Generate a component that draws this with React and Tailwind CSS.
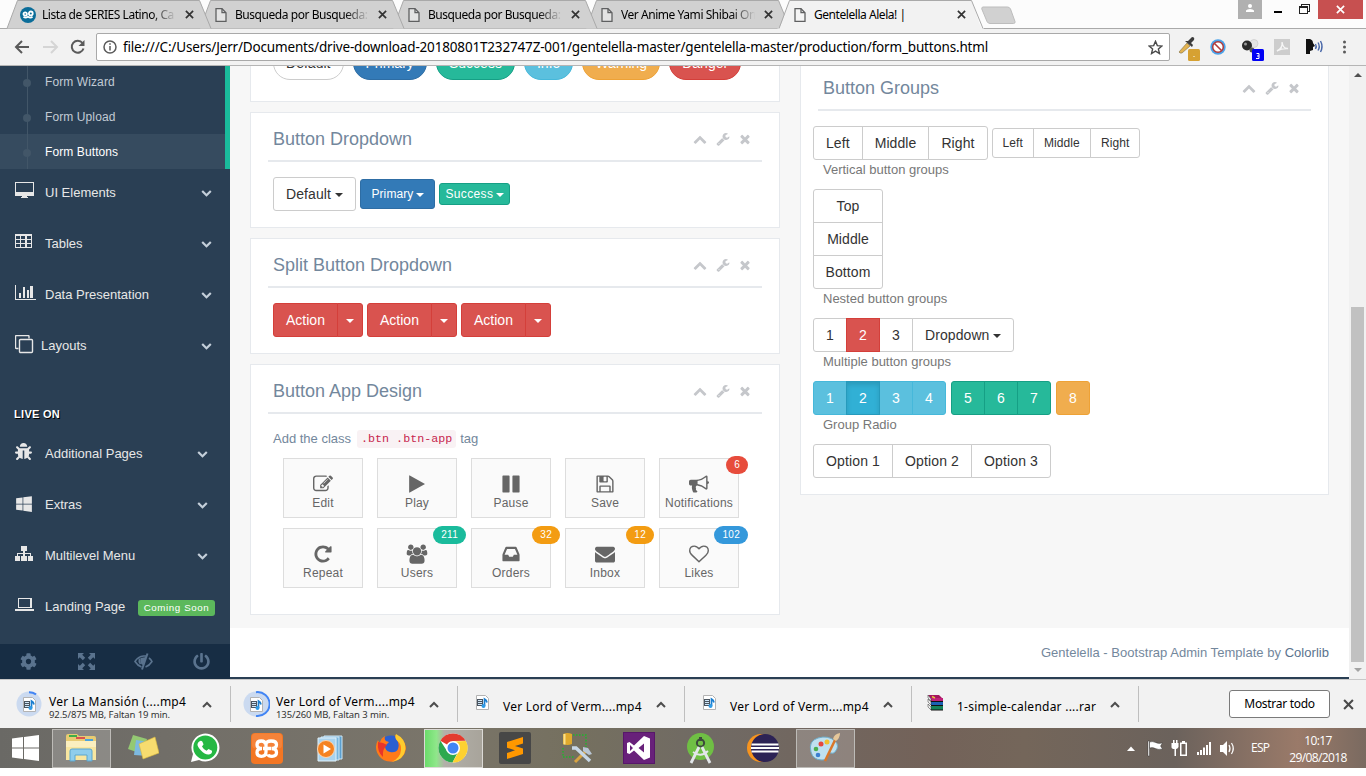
import React from 'react';
import { FaBug, FaWindows, FaCog, FaPowerOff } from 'react-icons/fa';

const P = {
  close: 'M1490 1322q0 40-28 68l-136 136q-28 28-68 28t-68-28l-294-294-294 294q-28 28-68 28t-68-28l-136-136q-28-28-28-68t28-68l294-294-294-294q-28-28-28-68t28-68l136-136q28-28 68-28t68 28l294 294 294-294q28-28 68-28t68 28l136 136q28 28 28 68t-28 68l-294 294 294 294q28 28 28 68z',
  up: 'M1683 1331l-166 165q-19 19-45 19t-45-19l-531-531-531 531q-19 19-45 19t-45-19l-166-165q-19-19-19-45.5t19-45.5l742-741q19-19 45-19t45 19l742 741q19 19 19 45.5t-19 45.5z',
  down: 'M1683 808l-742 741q-19 19-45 19t-45-19l-742-741q-19-19-19-45.5t19-45.5l166-165q19-19 45-19t45 19l531 531 531-531q19-19 45-19t45 19l166 165q19 19 19 45.5t-19 45.5z',
  wrench: 'M448 1472q0-26-19-45t-45-19-45 19-19 45 19 45 45 19 45-19 19-45zm644-420l-682 682q-37 37-90 37-52 0-91-37l-106-108q-38-36-38-90 0-53 38-91l681-681q39 98 114.5 173.5t173.5 114.5zm634-435q0 39-23 106-47 134-164.5 217.5t-258.5 83.5q-185 0-316.5-131.5t-131.5-316.5 131.5-316.5 316.5-131.5q58 0 121.5 16.5t107.5 46.5q16 11 16 28t-16 28l-293 169v224l193 107q5-3 79-48.5t135.5-81 70.5-35.5q15 0 23.5 10t8.5 25z',
  play: 'M1576 927l-1328 738q-23 13-39.5 3t-16.5-36v-1472q0-26 16.5-36t39.5 3l1328 738q23 13 23 31t-23 31z',
  pause: 'M1664 192v1408q0 26-19 45t-45 19h-512q-26 0-45-19t-19-45v-1408q0-26 19-45t45-19h512q26 0 45 19t19 45zm-896 0v1408q0 26-19 45t-45 19h-512q-26 0-45-19t-19-45v-1408q0-26 19-45t45-19h512q26 0 45 19t19 45z',
  edit: 'M888 1184l116-116-152-152-116 116v56h96v96h56zm440-720q-16-16-33 1l-350 350q-17 17-1 33t33-1l350-350q17-17 1-33zm80 594v190q0 119-84.5 203.5t-203.5 84.5h-832q-119 0-203.5-84.5t-84.5-203.5v-832q0-119 84.5-203.5t203.5-84.5h832q63 0 117 25 15 7 18 23 3 17-9 29l-49 49q-14 14-32 8-23-6-45-6h-832q-66 0-113 47t-47 113v832q0 66 47 113t113 47h832q66 0 113-47t47-113v-126q0-13 9-22l64-64q15-15 35-7t20 29zm-96-738l288 288-672 672h-288v-288zm444 132l-92 92-288-288 92-92q28-28 68-28t68 28l152 152q28 28 28 68t-28 68z',
  save: 'M512 1536h768v-384h-768v384zm896 0h128v-896q0-14-10-38.5t-20-34.5l-281-281q-10-10-34-20t-39-10v416q0 40-28 68t-68 28h-576q-40 0-68-28t-28-68v-416h-128v1280h128v-416q0-40 28-68t68-28h832q40 0 68 28t28 68v416zm-384-928v-320q0-13-9.5-22.5t-22.5-9.5h-192q-13 0-22.5 9.5t-9.5 22.5v320q0 13 9.5 22.5t22.5 9.5h192q13 0 22.5-9.5t9.5-22.5zm640 32v928q0 40-28 68t-68 28h-1344q-40 0-68-28t-28-68v-1344q0-40 28-68t68-28h928q40 0 88 20t76 48l280 280q28 28 48 76t20 88z',
  bullhorn: 'M1664 640q53 0 90.5 37.5t37.5 90.5-37.5 90.5-90.5 37.5v384q0 52-38 90t-90 38q-417-347-812-380-58 19-91 66t-31 100.5 40 92.5q-20 33-23 65.5t6 58 33.5 55 48 50 61.5 50.5q-29 58-111.5 83t-168.5 11.5-132-55.5q-7-23-29.5-87.5t-32-94.5-23-89-15-101 3.5-98.5 22-110.5h-122q-66 0-113-47t-47-113v-192q0-66 47-113t113-47h480q435 0 896-384 52 0 90 38t38 90v384zm-128 604v-954q-394 302-768 343v270q377 42 768 341z',
  repeat: 'M1664 256v448q0 26-19 45t-45 19h-448q-42 0-59-40-17-39 14-69l138-138q-148-137-349-137-104 0-198.5 40.5t-163.5 109.5-109.5 163.5-40.5 198.5 40.5 198.5 109.5 163.5 163.5 109.5 198.5 40.5q119 0 225-52t179-147q7-10 23-12 15 0 25 9l137 138q9 8 9.5 20.5t-7.5 22.5q-109 132-264 204.5t-327 72.5q-156 0-298-61t-245-164-164-245-61-298 61-298 164-245 245-164 298-61q147 0 284.5 55.5t244.5 156.5l130-129q29-31 70-14 39 17 39 59z',
  users: 'M657 896q-162 5-265 128h-134q-82 0-138-40.5t-56-118.5q0-353 124-353 6 0 43.5 21t97.5 42.5 119 21.5q67 0 133-23-5 37-5 66 0 139 81 256zm1071 637q0 120-73 189.5t-194 69.5h-874q-121 0-194-69.5t-73-189.5q0-53 3.5-103.5t14-109 26.5-108.5 43-97.5 62-81 85.5-53.5 111.5-20q10 0 43 21.5t73 48 107 48 135 21.5 135-21.5 107-48 73-48 43-21.5q61 0 111.5 20t85.5 53.5 62 81 43 97.5 26.5 108.5 14 109 3.5 103.5zm-1024-1277q0 106-75 181t-181 75-181-75-75-181 75-181 181-75 181 75 75 181zm704 384q0 159-112.5 271.5t-271.5 112.5-271.5-112.5-112.5-271.5 112.5-271.5 271.5-112.5 271.5 112.5 112.5 271.5zm576 225q0 78-56 118.5t-138 40.5h-134q-103-123-265-128 81-117 81-256 0-29-5-66 66 23 133 23 59 0 119-21.5t97.5-42.5 43.5-21q124 0 124 353zm-128-609q0 106-75 181t-181 75-181-75-75-181 75-181 181-75 181 75 75 181z',
  inbox: 'M1151 960h316q-1-3-2.5-8.5t-2.5-7.5l-212-496h-708l-212 496q-1 3-2.5 8.5t-2.5 7.5h316l95 192h320zm513 30v482q0 26-19 45t-45 19h-1408q-26 0-45-19t-19-45v-482q0-62 25-123l238-552q10-25 36.5-42t52.5-17h832q26 0 52.5 17t36.5 42l238 552q25 61 25 123z',
  envelope: 'M1792 710v794q0 66-47 113t-113 47h-1472q-66 0-113-47t-47-113v-794q44 49 101 87 362 246 497 345 57 42 92.5 65.5t94.5 48 110 24.5h2q51 0 110-24.5t94.5-48 92.5-65.5q170-123 498-345 57-39 100-87zm0-294q0 79-49 151t-122 123q-376 261-468 325-10 7-42.5 31t-54 38.5-52 32.5-57.5 27-50 9h-2q-23 0-50-9t-57.5-27-52-32.5-54-38.5-42.5-31q-91-64-262-182.5t-205-142.5q-62-42-117-115.5t-55-136.5q0-78 41.5-130t118.5-52h1472q65 0 112.5 47t47.500 113z',
  heart: 'M1664 596q0-81-21.5-143t-55-98.5-81.5-59.5-94-31-98-8-112 25.5-110.5 64-86.5 72-60 61.5q-18 22-49 22t-49-22q-24-28-60-61.5t-86.5-72-110.5-64-112-25.5-98 8-94 31-81.5 59.5-55 98.5-21.5 143q0 168 187 355l581 560 580-559q188-188 188-356zm128 0q0 221-229 450l-623 600q-18 18-44 18t-44-18l-624-602q-10-8-27.5-26t-55.5-65.5-68-97.5-53.5-121-23.5-138q0-220 127-344t351-124q62 0 126.5 21.5t120 58 95.5 68.5 76 68q36-36 76-68t95.5-68.5 120-58 126.5-21.5q224 0 351 124t127 344z',
};

function Glyph({ name, className, box = '0 0 1792 1792' }) {
  return (
    <svg viewBox={box} className={className} fill="currentColor">
      <path d={P[name]} />
    </svg>
  );
}

/* ---------- browser chrome ---------- */

const X = ({ className }) => (
  <svg viewBox="0 0 10 10" className={className} fill="none" stroke="currentColor" strokeWidth="1.9">
    <path d="M1 1l8 8M9 1l-8 8" />
  </svg>
);

const PageIcon = () => (
  <svg viewBox="0 0 12 14" className="h-3.5 w-3" fill="none" stroke="#5f6061" strokeWidth="1.3">
    <path d="M1 .7h6l4 4v8.6H1z" fill="#f7f7f7" fillOpacity=".5" />
    <path d="M7 .7v4h4" />
  </svg>
);

const SeriesIcon = () => (
  <svg viewBox="0 0 16 16" className="-ml-0.5 size-4">
    <circle cx="8" cy="8" r="8" fill="#0b6d99" />
    <circle cx="5.2" cy="7" r="1.7" fill="none" stroke="#fff" strokeWidth="1.8" />
    <circle cx="10.8" cy="6.4" r="1.9" fill="none" stroke="#fff" strokeWidth="1.8" />
    <path d="M3.500 9.800q2 1.500 4.500 0 2.500 1.500 4.500 0" fill="none" stroke="#fff" strokeWidth="1.700" />
  </svg>
);

const tabs = [
  { title: 'Lista de SERIES Latino, Ca', z: 'z-[5]' },
  { title: 'Busqueda por Busqueda:', z: 'z-[4]' },
  { title: 'Busqueda por Busqueda:', z: 'z-[3]' },
  { title: 'Ver Anime Yami Shibai On', z: 'z-[2]' },
  { title: 'Gentelella Alela! |', z: 'z-[6]', active: true },
];

function Tab({ tab, first }) {
  return (
    <div className={`relative flex h-[29px] w-[193px] items-center pl-[17px] ${tab.z}`}>
      <svg className="absolute top-0 left-0 h-[29px] w-[208px]" viewBox="0 0 208 29">
        <path d={tab.active ? 'M0 29L1 28.500C4 27 4 24 12.500.5H194.500C203 24 203 28 207 28.500V29Z' : 'M2 28.500L12.500.5H194.500L206 28.500Z'} fill={tab.active ? '#f2f2f2' : '#d1d1d1'} />
        <path d="M2 28.500L12.500.5H194.500L206 28.500" fill="none" stroke="#a9a9a9" />
      </svg>
      <div className="relative flex h-[29px] w-full items-center">
        <div className="w-[20px] shrink-0">{first ? <SeriesIcon /> : <PageIcon />}</div>
        <div className={`w-[137px] shrink-0 text-[12px] tracking-[-0.450px] whitespace-nowrap text-black ${tab.active ? '' : '[mask-image:linear-gradient(to_right,#000_80%,transparent_98%)]'}`}>{tab.title}</div>
        <X className="ml-[6px] size-[9px] text-[#333]" />
      </div>
    </div>
  );
}

function TabStrip() {
  return (
    <div className="flex h-[29px] shrink-0 border-b border-[#a9a9a9] bg-[#fcfcfc] pl-[5px]">
      {tabs.map((t, i) => <Tab key={i} tab={t} first={i === 0} />)}
      <svg className="mt-[6px] ml-[11px] h-[19px] w-[35px]" viewBox="0 0 35 19">
        <path d="M2 1h24.500q2 0 3 2l4.500 12.500q.5 2-1.500 2H9q-2 0-3-2L.8 3Q.5 1 2 1z" fill="#d1d1d1" stroke="#bdbdbd" />
      </svg>
      <div className="ml-auto flex h-[19px] pr-[3px]">
        <div className="flex w-[24px] justify-center bg-[#b0b0b0] pt-[4px]">
          <svg viewBox="0 0 8 8" className="size-2" fill="#fff"><circle cx="4" cy="2" r="2" /><path d="M0 8V6.500Q1 5 4 5t4 1.500V8z" /></svg>
        </div>
        <div className="flex w-[32px] justify-center pt-[11px]"><div className="h-[2px] w-[8px] bg-black" /></div>
        <div className="flex w-[24px] pt-[4px] pl-[5px]">
          <svg viewBox="0 0 11 10" className="h-2.5 w-[11px]" fill="none" stroke="#222" shapeRendering="crispEdges"><path d="M.5 2.500h7.500v7H.5zM1 3.500h7M2.500 2V.5h8v7H8" /></svg>
        </div>
        <div className="flex w-[45px] items-center justify-center bg-[#c75050] text-white"><X className="size-[9px]" /></div>
      </div>
    </div>
  );
}

function Toolbar() {
  return (
    <div className="flex h-[37px] shrink-0 items-center border-b border-[#b5b5b5] bg-[#f2f2f2]">
      <svg viewBox="0 0 96 30" className="h-[30px] w-[96px] shrink-0" fill="none" strokeWidth="2">
        <path d="M29 15H16.500M22 9l-6 6 6 6" stroke="#5a5a5a" />
        <path d="M43 15h13M51 9l6 6-6 6" stroke="#d5d5d5" />
        <path d="M82.500 11A6 6 0 1 0 83.500 16.500" stroke="#5a5a5a" />
        <path d="M84.500 8v6h-6z" fill="#5a5a5a" />
      </svg>
      <div className="flex h-[28px] w-[1074px] items-center rounded-[2px] border border-[#a9a9a9] bg-white px-[6px]">
        <svg viewBox="0 0 14 14" className="size-3.5" fill="none" stroke="#5a5a5a" strokeWidth="1.500"><circle cx="7" cy="7" r="6" /><path d="M7 6v4.500M7 3.300v1.500" /></svg>
        <div className="ml-[6px] flex-1 text-[13.500px] tracking-[-0.170px] whitespace-nowrap text-black">file:///C:/Users/Jerr/Documents/drive-download-20180801T232747Z-001/gentelella-master/gentelella-master/production/form_buttons.html</div>
        <svg viewBox="0 0 14 14" className="size-[15px]" fill="none" stroke="#4a4a4a" strokeWidth="1.300"><path d="M7 1.200l1.700 4 4.300.4-3.300 2.800 1 4.200L7 10.400l-3.700 2.200 1-4.200L1 5.600l4.300-.4z" /></svg>
      </div>
      <svg viewBox="0 0 190 32" className="ml-[6px] h-[32px] w-[190px] shrink-0">
        <path d="M4 22l-1-1 8-9 3 3-8 7z" fill="#e3b350" stroke="#8b7a50" strokeWidth=".7" />
        <path d="M9 10l7 6 1-2-2-2 3-3q1-3-2-3l-4 4z" fill="#3c3c3c" />
        <rect x="12" y="18" width="12" height="12" rx="1.500" fill="#d6a132" />
        <rect x="17.500" y="25" width="1" height="1" fill="#fff" />
        <circle cx="42" cy="16" r="7.700" fill="#4ba3ea" />
        <circle cx="42" cy="16" r="5.300" fill="#fff" stroke="#b23a3a" strokeWidth="1.500" />
        <path d="M38.500 12.500l7 7" stroke="#b23a3a" strokeWidth="1.600" />
        <circle cx="78" cy="12.500" r="4" fill="#e4e4e4" stroke="#c4c4c4" strokeWidth=".6" />
        <circle cx="71" cy="14.500" r="5" fill="#2a2a2a" /><circle cx="69.500" cy="13" r="1.500" fill="#999" />
        <circle cx="76" cy="19" r="2.500" fill="#555" />
        <rect x="76" y="18" width="12" height="12" rx="1.500" fill="#0000f5" />
        <path d="M80.500 22.500h2.500v5h-3M83 25h-2" fill="none" stroke="#fff" />
        <rect x="98" y="8" width="16" height="16" fill="#cdcdcd" />
        <path d="M101 20q6-3 5-9 1 7 6 6.500-6-.5-11 2.500z" fill="none" stroke="#f6f6f6" strokeWidth="1.400" />
        <path d="M130 8h4q3 1 3 4l2 3-2 1v3l-3 1v3h-4z" fill="#111" />
        <path d="M139.500 13q1.500 2.500 0 5M142 11.500q2.500 4 0 8M144.500 10q3 5.500 0 11" fill="none" stroke="#4766a8" strokeWidth="1.400" />
        <g fill="#5a5a5a"><circle cx="168.500" cy="11" r="1.500" /><circle cx="168.500" cy="16" r="1.500" /><circle cx="168.500" cy="21" r="1.500" /></g>
      </svg>
    </div>
  );
}

/* ---------- sidebar ---------- */

const S = ({ children }) => (
  <svg viewBox="0 0 22 19" className="h-[19px] w-[22px]" fill="currentColor" shapeRendering="crispEdges" fillRule="evenodd">{children}</svg>
);

const sideIcons = {
  desktop: <S><path d="M0 0h19v14H0zM1 1v9h17V1zM7 14h5v1H7zM6 15h7v1H6z" /></S>,
  table: <S><path d="M0 1h17v14H0zM1 3v3h4V3zM6 3v3h4V3zM12 3v3h4V3zM1 7v3h4V7zM6 7v3h4V7zM12 7v3h4V7zM1 11v3h4v-3zM6 11v3h4v-3zM12 11v3h4v-3z" /></S>,
  chart: <S><path d="M0 1h1v14h20v1H0zM4 9h2v5H4zM8 3h2v11H8zM12 6h2v8h-2zM15 2h3v12h-3z" /></S>,
  clone: (
    <svg viewBox="0 0 22 19" className="h-[19px] w-[22px]" fill="none" stroke="currentColor" strokeWidth="1.400"><path d="M3.500 13.500H1.500q-1 0-1-1V1.500q0-1 1-1H13q1 0 1 1v2" /><rect x="4.500" y="4.500" width="13" height="13" rx="1" /></svg>
  ),
  bug: <FaBug className="size-[17px]" />,
  windows: <FaWindows className="mt-[1px] size-[18px]" />,
  sitemap: <S><path d="M6 1h6v5H6zM8 6h2v2h6v3h2v5h-5v-5h2V9h-5v2h2v5H6v-5h2V9H3v2h2v5H0v-5h2V8h6z" /></S>,
  laptop: <S><path d="M3 2h14v10H3zM4 3v8h11V3zM0 13h19v2H0z" /></S>,
};

function MenuItem({ icon, label, chev, close, badge }) {
  return (
    <div className="mb-[5px] flex h-[46px] pl-[15px] text-[13px] text-[#e7e7e7]">
      <div className={`h-[19px] pt-[13px] ${close ? 'w-[26px]' : 'w-[30px]'}`}>{sideIcons[icon]}</div>
      <div className="flex-1 self-center pt-[2px] whitespace-nowrap">{label}</div>
      {badge && <div className="mt-[17px] mr-[15px] h-[16px] w-[77px] rounded-[3px] bg-[#5cb85c] text-center text-[9.750px] leading-[16px] tracking-[0.600px] whitespace-nowrap text-white">{badge}</div>}
      {chev && <Glyph name="down" className={`mt-[18px] size-[11px] text-[#c4cfda] ${chev}`} />}
    </div>
  );
}

function SubItem({ label, active }) {
  return (
    <div className={`relative flex h-[35px] shrink-0 items-center text-[12px] tracking-[0.100px] ${active ? 'bg-[#364b5f] text-white' : 'text-[#c2cbd4]'}`}>
      <div className="absolute top-0 left-[27px] h-[35px] w-px bg-[#425668]" />
      <div className="absolute top-[15px] left-[23px] size-2 rounded-full bg-[#425668]" />
      <div className="pl-[45px]">{label}</div>
    </div>
  );
}

function Sidebar() {
  return (
    <div className="flex w-[230px] shrink-0 flex-col overflow-hidden bg-[#2A3F54]">
      <div className="-mt-[2px] flex flex-col border-r-[5px] border-[#1ABB9C]">
        <SubItem label="Form Wizard" />
        <SubItem label="Form Upload" />
        <SubItem label="Form Buttons" active />
      </div>
      <MenuItem icon="desktop" label="UI Elements" chev="mr-[18.500px]" />
      <MenuItem icon="table" label="Tables" chev="mr-[18.500px]" />
      <MenuItem icon="chart" label="Data Presentation" chev="mr-[18.500px]" />
      <MenuItem icon="clone" label="Layouts" chev="mr-[18.500px]" close />
      <div className="h-[57px] pt-[33px] pl-[14px] text-[11px] leading-[17px] font-bold tracking-[0.300px] text-white [text-shadow:1px_1px_#000]">LIVE ON</div>
      <MenuItem icon="bug" label="Additional Pages" chev="mr-[22.500px]" />
      <MenuItem icon="windows" label="Extras" chev="mr-[22.500px]" />
      <MenuItem icon="sitemap" label="Multilevel Menu" chev="mr-[22.500px]" />
      <MenuItem icon="laptop" label="Landing Page" badge="Coming Soon" />
      <div className="mt-auto grid h-[35px] shrink-0 grid-cols-4 place-items-center bg-[#172D44] text-[#5A738E]">
        <FaCog className="size-[17px]" />
        <svg viewBox="0 0 17 17" className="size-[17px]" fill="currentColor"><path d="M0 0h6L4.200 1.800l3 3-2.400 2.400-3-3L0 6zM17 0v6l-1.800-1.800-3 3-2.400-2.400 3-3L11 0zM0 17v-6l1.800 1.800 3-3 2.400 2.400-3 3L6 17zM17 17h-6l1.800-1.800-3-3 2.400-2.400 3 3L17 11z" /></svg>
        <svg viewBox="0 0 19 17" className="h-[17px] w-[19px]" fill="none" stroke="currentColor" strokeWidth="1.600"><path d="M7.500 14Q3.500 12.500 1 8.500 4 3.500 9.500 3H13M15 5q2 1.500 3 3.500-2.500 4-6.500 5.500M5.500 5.500q-1 3 1 5.500" /><path d="M13.500.5L8 16.500" strokeWidth="2" /><path d="M6.500 5l6-1-3.500 8q-3.500-1-2.500-7z" fill="currentColor" stroke="none" /></svg>
        <FaPowerOff className="size-[17px]" />
      </div>
    </div>
  );
}

/* ---------- panels and buttons ---------- */

const tones = {
  default: 'bg-white border-[#ccc] text-[#333]',
  primary: 'bg-[#337ab7] border-[#2e6da4] text-white',
  success: 'bg-[#26B99A] border-[#169F85] text-white',
  info: 'bg-[#5bc0de] border-[#46b8da] text-white',
  infoActive: 'bg-[#31b0d5] border-[#269abc] text-white shadow-[inset_0_3px_5px_rgba(0,0,0,0.125)]',
  warning: 'bg-[#f0ad4e] border-[#eea236] text-white',
  danger: 'bg-[#d9534f] border-[#d43f3a] text-white',
};
const sizes = {
  md: 'h-[34px] px-[12px] text-[14px] tracking-[0.080px]',
  pill: 'h-[34px] px-[12px] text-[14px] tracking-[0.020px]',
  action: 'h-[34px] w-[65px] text-[14px]',
  num: 'h-[34px] w-[34px] text-[14px]',
  option: 'h-[34px] w-[80px] text-[14px] tracking-[0.130px]',
  sm: 'h-[30px] px-[10px] text-[12px] tracking-[0.100px]',
  xs: 'h-[22px] px-[5px] text-[12px] tracking-[0.350px]',
  caret: 'h-[34px] px-[8px]',
};

const Caret = ({ className = '' }) => <span className={`mt-[2px] inline-block border-x-4 border-t-4 border-x-transparent border-t-current ${className}`} />;

function Btn({ tone = 'default', size = 'md', className = 'rounded-[3px]', children }) {
  return <button className={`flex shrink-0 items-center justify-center border whitespace-nowrap ${tones[tone]} ${sizes[size]} ${className}`}>{children}</button>;
}

function Group({ items, size, tone }) {
  return (
    <div className="flex">
      {items.map((it, i) => {
        const o = typeof it === 'object' ? it : { label: it };
        const shape = `${i === 0 ? 'rounded-l-[3px]' : '-ml-px'} ${i === items.length - 1 ? 'rounded-r-[3px]' : ''} ${o.z || ''}`;
        return <Btn key={i} tone={o.tone || tone} size={o.size || size} className={shape}>{o.label}</Btn>;
      })}
    </div>
  );
}

function Panel({ title, className = '', children }) {
  return (
    <div className={`flex shrink-0 flex-col border border-[#E6E9ED] bg-white px-[17px] pt-[10px] ${className}`}>
      <div className="flex h-[39px] shrink-0 items-start justify-between border-b-2 border-[#E6E9ED] pl-[5px]">
        <h2 className="text-[18px] leading-[33px] text-[#73879C]">{title}</h2>
        <div className="mt-[9px] flex gap-[8px] pr-[10.500px] text-[#C5C7CB]">
          <Glyph name="up" className="size-[14px]" />
          <Glyph name="wrench" className="ml-[1px] size-[14px]" />
          <Glyph name="close" className="size-[14px]" />
        </div>
      </div>
      {children}
    </div>
  );
}

const apps = [
  ['edit', 'Edit'], ['play', 'Play'], ['pause', 'Pause'], ['save', 'Save'], ['bullhorn', 'Notifications', '6', 'bg-[#E74C3C]'],
  ['repeat', 'Repeat'], ['users', 'Users', '211', 'bg-[#1ABB9C]'], ['inbox', 'Orders', '32', 'bg-[#F39C12]'], ['envelope', 'Inbox', '12', 'bg-[#F39C12]'], ['heart', 'Likes', '102', 'bg-[#3498DB]'],
];

function LeftColumn() {
  return (
    <div className="flex w-[530px] flex-col gap-[10px]">
      <div className="-mt-[40px] flex h-[76px] shrink-0 border border-t-0 border-[#E6E9ED] bg-white pt-[20px] pl-[22px]">
        <div className="flex gap-[9px]">
          <Btn size="pill" className="rounded-full">Default</Btn>
          <Btn size="pill" tone="primary" className="rounded-full">Primary</Btn>
          <Btn size="pill" tone="success" className="rounded-full">Success</Btn>
          <Btn size="pill" tone="info" className="rounded-full">Info</Btn>
          <Btn size="pill" tone="warning" className="rounded-full">Warning</Btn>
          <Btn size="pill" tone="danger" className="rounded-full">Danger</Btn>
        </div>
      </div>
      <Panel title="Button Dropdown" className="h-[116px]">
        <div className="mt-[15px] flex h-[34px] items-center gap-[4px] pl-[5px]">
          <Btn>Default<Caret className="ml-[4.500px]" /></Btn>
          <Btn tone="primary" size="sm">Primary<Caret className="ml-[3px]" /></Btn>
          <Btn tone="success" size="xs">Success<Caret className="ml-[3px]" /></Btn>
        </div>
      </Panel>
      <Panel title="Split Button Dropdown" className="h-[116px]">
        <div className="mt-[15px] flex gap-[4px] pl-[5px]">
          {[0, 1, 2].map((k) => <Group key={k} tone="danger" items={[{ label: 'Action', size: 'action' }, { label: <Caret />, size: 'caret' }]} />)}
        </div>
      </Panel>
      <Panel title="Button App Design" className="h-[251px]">
        <p className="mt-[15px] flex h-[20px] items-center pl-[5px] text-[13px] text-[#73879C]">
          Add the class
          <code className="mr-[4px] ml-[6px] h-[18px] rounded-[3px] bg-[#f9f2f4] px-[4px] font-['Liberation_Mono',monospace] text-[11.700px] leading-[18px] text-[#c7254e]">.btn .btn-app</code>
          tag
        </p>
        <div className="mt-[9px] grid grid-cols-[repeat(5,80px)] gap-x-[14px] gap-y-[10px] pl-[15px]">
          {apps.map(([icon, label, count, tone]) => (
            <div key={label} className="relative flex h-[60px] flex-col items-center border border-[#ddd] bg-[#fafafa] pt-[15px] text-[#666]">
              <Glyph name={icon} box={icon === 'users' ? '0 0 2048 1792' : undefined} className={icon === 'users' ? 'h-[20px] w-[22px]' : 'size-[20px]'} />
              <span className="text-[12px] leading-[18px] tracking-[0.200px]">{label}</span>
              {count && <span className={`absolute -top-[3px] -right-[10px] h-[18px] rounded-[10px] px-[8px] text-[10px] leading-[17px] tracking-[0.300px] text-white ${tone}`}>{count}</span>}
            </div>
          ))}
        </div>
      </Panel>
    </div>
  );
}

const Label = ({ children }) => <p className="flex h-[29px] items-start pl-[5px] text-[13px] leading-[19px] text-[#777]">{children}</p>;

function RightPanel() {
  return (
    <Panel title="Button Groups" className="-mt-[5px] h-[434px] w-[529px]">
      <div className="mt-[15px] -ml-[5px] flex h-[34px] items-center gap-[4px]">
        <Group items={['Left', 'Middle', 'Right']} />
        <Group items={['Left', 'Middle', 'Right']} size="sm" />
      </div>
      <Label>Vertical button groups</Label>
      <div className="-ml-[5px] flex w-[70px] flex-col">
        <Btn className="rounded-t-[3px]">Top</Btn>
        <Btn className="-mt-px">Middle</Btn>
        <Btn className="-mt-px rounded-b-[3px]">Bottom</Btn>
      </div>
      <Label>Nested button groups</Label>
      <div className="-ml-[5px] flex">
        <Group size="num" items={['1', { label: '2', tone: 'danger', z: 'z-[1]' }, '3', { size: 'md', label: <>Dropdown<Caret className="ml-[4px]" /></> }]} />
      </div>
      <Label>Multiple button groups</Label>
      <div className="-ml-[5px] flex gap-[5px]">
        <Group size="num" tone="info" items={['1', { label: '2', tone: 'infoActive', z: 'z-[1]' }, '3', '4']} />
        <Group size="num" tone="success" items={['5', '6', '7']} />
        <Group size="num" tone="warning" items={['8']} />
      </div>
      <Label>Group Radio</Label>
      <div className="-ml-[5px] flex"><Group size="option" items={['Option 1', 'Option 2', 'Option 3']} /></div>
    </Panel>
  );
}

function Page() {
  return (
    <div className="flex h-[613px] shrink-0 overflow-hidden font-['Liberation_Sans',Arial,sans-serif]">
      <Sidebar />
      <div className="flex flex-1 flex-col bg-[#F7F7F7]">
        <div className="flex h-[562px] shrink-0 gap-[20px] pl-[20px]">
          <LeftColumn />
          <RightPanel />
        </div>
        <footer className="h-[49px] bg-white pr-[20px] text-right text-[13px] leading-[49px] tracking-[0.030px] text-[#73879C]">
          Gentelella - Bootstrap Admin Template by <span className="text-[#5A738E]">Colorlib</span>
        </footer>
        <div className="h-[2px] bg-[#2A3F54]" />
      </div>
      <div className="flex w-[17px] flex-col items-center bg-[#f1f1f1]">
        <div className="mt-[7px] border-x-4 border-b-4 border-x-transparent border-b-[#505050]" />
        <div className="mt-[230px] h-[355px] w-[13px] bg-[#c1c1c1]" />
        <div className="mt-[6px] border-x-4 border-t-4 border-x-transparent border-t-[#a3a3a3]" />
      </div>
    </div>
  );
}

/* ---------- downloads ---------- */

const Media = () => (
  <g>
    <path d="M.5.5h9l3 3v11H.5z" fill="#fff" stroke="#b3b3b3" />
    <path d="M1 4h6v7H1z" fill="#4a5560" /><path d="M2 5.500h4M2 7.500h4M2 9.500h4" stroke="#cfe6f7" />
    <path d="M8.500 11V4q2 1 2.500 3.500" fill="none" stroke="#1b7fd0" strokeWidth="1.700" /><circle cx="7.500" cy="11" r="2" fill="#2f9be6" />
  </g>
);

const RarIcon = () => (
  <svg viewBox="0 0 17 17" className="mb-[4px] ml-[3px] size-[17px]">
    <path d="M1 1h11l4 4H4z" fill="#a3155f" /><path d="M4 4h12v3H4z" fill="#c02079" /><path d="M1 1l3 4v2L1 4z" fill="#eee" stroke="#333" strokeWidth=".5" />
    <path d="M4 7h12v4H4z" fill="#1a62b4" /><path d="M1 5l3 3v3L1 8z" fill="#eee" stroke="#333" strokeWidth=".5" />
    <path d="M4 12h12v4H4z" fill="#14835a" /><path d="M1 10l3 3v3l-3-3z" fill="#eee" stroke="#333" strokeWidth=".5" />
    <path d="M4 11.500h12M4 7.500h12M4 16h12" stroke="#111" />
    <path d="M5 2.500l3 1.500" stroke="#e7c23c" strokeWidth="1.500" />
  </svg>
);

const downloads = [
  { name: 'Ver La Mansión (....mp4', sub: '92.5/875 MB, Faltan 19 min.', arc: 'M13 1.200a12 12 0 0 1 7 2.200' },
  { name: 'Ver Lord of Verm....mp4', sub: '135/260 MB, Faltan 3 min.', arc: 'M13 1.200a12 12 0 1 1 0 23.800' },
  { name: 'Ver Lord of Verm....mp4' },
  { name: 'Ver Lord of Verm....mp4' },
  { name: '1-simple-calendar ....rar', rar: true },
];

function DownloadBar() {
  return (
    <div className="flex h-[49px] shrink-0 items-center border-t border-[#c8c8c8] bg-[#f2f2f2] font-['Noto_Sans','Open_Sans',sans-serif]">
      {downloads.map((d, i) => (
        <div key={i} className={`flex h-[36px] items-center border-r border-[#bfbfbf] ${i === 0 ? 'w-[231px] pl-[16px]' : 'w-[227px] pl-[12px]'}`}>
          <div className="flex w-[33px] shrink-0 items-center">
            {d.sub ? (
              <svg viewBox="0 0 27 27" className="size-[27px]">
                <circle cx="13" cy="13" r="12.500" fill="#cbdaf0" />
                <path d={d.arc} fill="none" stroke="#4285f4" strokeWidth="2" />
                <g transform="translate(7 6)"><Media /></g>
              </svg>
            ) : d.rar ? <RarIcon /> : (
              <svg viewBox="0 0 14 16" className="mb-[2px] ml-[6px] h-[16px] w-[14px]"><Media /></svg>
            )}
          </div>
          <div className={`w-[146px] whitespace-nowrap text-black ${d.sub ? 'pt-[7px]' : 'pt-[5px]'}`}>
            <div className="text-[12px] leading-[14px] tracking-[0.240px]">{d.name}</div>
            {d.sub && <div className="text-[9.500px] leading-[12px] tracking-[-0.100px] text-[#333]">{d.sub}</div>}
          </div>
          <svg viewBox="0 0 10 7" className="ml-[7px] h-[7px] w-[10px]" fill="none" stroke="#4d4d4d" strokeWidth="2"><path d="M1 6l4-4 4 4" /></svg>
        </div>
      ))}
      <button className="ml-[90px] h-[28px] w-[101px] rounded-[3px] border border-[#7a7a7a] bg-white pb-[1px] text-[12px] tracking-[-0.300px] text-black">Mostrar todo</button>
      <X className="ml-[13px] size-[11px] text-[#4a4a4a]" />
    </div>
  );
}

/* ---------- taskbar ---------- */

const Ico = ({ children }) => <svg viewBox="0 0 32 32" className="size-8">{children}</svg>;

const taskIcons = [
  { active: true, icon: (
    <Ico>
      <path d="M1 4q0-2 2-2h9l2 2h15q2 0 2 2v22H1z" fill="#e8cb72" /><path d="M4 3h8v2H4z" fill="#3fae49" /><path d="M11 5h9v2h-9z" fill="#d9534f" /><path d="M20 7h8v2h-8z" fill="#4aa3df" />
      <path d="M1 9h30v19H1z" fill="#f8e6a0" /><path d="M1 9h30v6H1z" fill="#fbefbf" />
      <path d="M5 29V19q0-2 2-2h18q2 0 2 2v10h-5v-6H10v6z" fill="#8fcdec" stroke="#5aa6cf" />
    </Ico>) },
  { icon: (
    <Ico>
      <path d="M6 3l14 4-5 15L1 17z" fill="#94c973" /><path d="M9 8l13 2-1 14-14-1z" fill="#7db9e0" /><path d="M12 12l16-7 4 16-16 6z" fill="#f7dc6f" stroke="#d8b93e" strokeWidth=".6" />
    </Ico>) },
  { icon: (
    <svg viewBox="0 0 30 30" className="size-[30px]"><path d="M1 29l2-8A14 14 0 1 1 9 27z" fill="#fff" /><circle cx="15.300" cy="14.500" r="12" fill="#25b843" /><path d="M10 8q2-1 3 2l.5 1.500-1.500 2q1.500 3 4.500 4.300l2-1.800 3.500 1.800q.5 3-3 3.700-4 .5-8-4t-3.500-6.500q.5-2 2.500-3z" fill="#fff" /></svg>) },
  { icon: (
    <Ico>
      <rect x="0" y="1" width="32" height="31" rx="4" fill="#f37623" /><rect x="1" y="1.500" width="30" height="15" rx="3.500" fill="#f5833a" />
      <path d="M12 16.500h8M14.500 12.500q0-3.500-4.200-3.500-4.300 0-4.300 3.800 0 3.700 5 3.700-5 0-5 4 0 3.800 4.300 3.800 4.700 0 4.700-4.300V12.500q0-3.500 5-3.500 5.500 0 5.500 3.800 0 3.700-5 3.700 5 0 5 4 0 3.800-4.500 3.800-3.500 0-4-2" fill="none" stroke="#fff" strokeWidth="3.300" />
    </Ico>) },
  { icon: (
    <Ico>
      <path d="M11 4h18v23H11z" fill="#5b9fcf" stroke="#cfe7f5" /><path d="M8 5h18v23H8z" fill="#77b5dd" stroke="#cfe7f5" /><path d="M5 6h18v23H5z" fill="#a9d3ee" stroke="#e1f1fa" />
      <circle cx="13" cy="17" r="8.500" fill="#f58220" stroke="#fbd5b0" /><path d="M10.500 12.500l7.500 4.500-7.500 4.500z" fill="#fff" />
    </Ico>) },
  { icon: (
    <Ico>
      <circle cx="16" cy="16.500" r="13" fill="#2d5fd0" /><path d="M20 3q9 3 11 12a15 14.500 0 1 1-28-7q1 3 2 2 1-4 5-6-1 3 1 5l3 1-4 4q0 5 5 6 6 1 8-3 2-6-2-10z" fill="#ff7a18" /><path d="M21 2q10 5 9.500 15-1.500 11-14 13 9-4 9.500-12 .5-6-3-8.500Q19 6 21 2z" fill="#ffcb2e" />
      <path d="M3 10q-1 10 5 15-1-8 4-12l-4-2z" fill="#e8352a" />
    </Ico>) },
  { chrome: true, icon: (
    <Ico>
      <circle cx="16" cy="16" r="14.500" fill="#fff" />
      <path d="M16 16L3.400 8.800A14.500 14.500 0 0 1 28.600 8.800L16 9z" fill="#e33b2e" /><path d="M3.400 8.700A14.500 14.500 0 0 0 15.500 30.500L21 20 16 16 10 19z" fill="#2da94f" /><path d="M28.800 9A14.500 14.500 0 0 1 15.500 30.500L22 19 16 9.500z" fill="#fdd131" />
      <circle cx="16" cy="16" r="7" fill="#fff" /><circle cx="16" cy="16" r="5.500" fill="#4285f4" />
    </Ico>) },
  { icon: (
    <Ico>
      <rect width="32" height="32" rx="2" fill="#474747" /><path d="M8 10l16-5v6.500L16 14l8 2.500V22L8 27v-6l8-2.700-8-2.500z" fill="#ff9800" />
    </Ico>) },
  { icon: (
    <Ico>
      <path d="M12 3h13v12M2 16v9h11" fill="none" stroke="#1fb52c" strokeWidth="1.400" strokeDasharray="1.500 1.500" />
      <path d="M2 2q4.500-2 9 0v10q-4.500 2-9 0z" fill="#e0a92c" /><path d="M3.500 2v10.500" stroke="#fbe08a" strokeWidth="2" />
      <path d="M14 30l12-12" stroke="#d9a441" strokeWidth="3" /><path d="M11 16l4 0 14 13" fill="none" stroke="#c7d7e6" strokeWidth="3.500" /><path d="M22 15l5 1 4 6-3 1-6-4z" fill="#b9c6d4" />
    </Ico>) },
  { icon: (
    <Ico>
      <rect x=".5" y=".5" width="31" height="31" fill="#68217a" stroke="#57176a" /><path d="M21 4l6 2.500v19L21 28 11 18.500 6.500 22 4 21V11l2.500-1 4.500 3.500zM21 11.500L15.500 16 21 20.500zM7 13v6l3-3z" fill="#fff" fillRule="evenodd" />
    </Ico>) },
  { icon: (
    <Ico>
      <circle cx="15.500" cy="14.500" r="13.500" fill="#6fbf44" /><circle cx="15.500" cy="11" r="3.600" fill="none" stroke="#3c4a3c" strokeWidth="2" />
      <path d="M14 15L6 31M17 15l8 16" stroke="#e3e7ea" strokeWidth="2.800" /><path d="M8 20q8 6 15-1" fill="none" stroke="#e3e7ea" strokeWidth="1.800" /><path d="M15.500 5v4" stroke="#3c4a3c" strokeWidth="3" />
    </Ico>) },
  { icon: (
    <Ico>
      <circle cx="14" cy="16" r="14" fill="#f7941e" /><circle cx="18" cy="16" r="14" fill="#2c2255" /><path d="M4.500 12.500h27M4 16h28M4.500 19.500h27" stroke="#fff" strokeWidth="1.900" />
    </Ico>) },
  { active: true, icon: (
    <Ico>
      <path d="M2 20Q-1 9 9 6t17 3q5 5 0 11-2 2-4 1t-3 2q0 5-6 5-9 0-11-8z" fill="#bfe0f0" stroke="#6faecb" />
      <circle cx="12" cy="12" r="2.500" fill="#e5483d" /><circle cx="18" cy="10" r="2.500" fill="#f1c02d" /><circle cx="7" cy="17" r="2.300" fill="#4bae4f" /><circle cx="9" cy="23" r="2.300" fill="#3b7fd1" />
      <path d="M16 29L27 6" stroke="#d9772a" strokeWidth="2.500" /><path d="M24 7q1-5 7-6 0 5-4 8z" fill="#e6c79a" />
    </Ico>) },
];

function Taskbar() {
  return (
    <div className="flex h-[40px] shrink-0 items-center bg-[linear-gradient(to_right,#6a6965_0%,#716e68_12%,#7a756a_32%,#75705f_42%,#706a64_52%,#736259_68%,#74665a_75%,#6b625c_86%,#9a7a69_95%,#7a6a60_100%)] font-['Open_Sans','Noto_Sans',sans-serif]">
      <div className="flex w-[50px] shrink-0 justify-center">
        <svg viewBox="0 0 27 26" className="h-[26px] w-[27px]" fill="#fff"><path d="M0 3.500L11 2v10.500H0zM12 1.900L27 0v12.500H12zM0 13.500h11V24L0 22.500zM12 13.500h15V26l-15-2z" /></svg>
      </div>
      {taskIcons.map((t, i) => (
        <div key={i} className="flex h-[40px] w-[62px] shrink-0 items-center justify-center">
          <div className={`flex h-[39px] w-[59px] items-center justify-center ${t.active ? 'border border-[#bdbbb7] bg-white/20' : ''} ${t.chrome ? 'border border-[#dcdad6] bg-[linear-gradient(to_right,#6bdc6b_0%,#8fe78a_20%,#b3b0a9_34%,#a8a49b_100%)]' : ''}`}>{t.icon}</div>
        </div>
      ))}
      <svg viewBox="0 0 124 20" className="ml-[264px] h-[20px] w-[124px] shrink-0" fill="#fff">
        <path d="M7 13l4-4.500 4 4.500z" />
        <path d="M28 3h1.500v15H28zM29.500 4q3-1 6 .5t7 .5l-2 3 2 3q-4 1-7-.5t-6-.5z" stroke="#222" strokeWidth=".4" />
        <path d="M53 2h1.500v3H53zM56 2h1.500v3H56zM51.500 5h7v4q-1 2-2.500 2v7h-1.500v-7q-3 0-3-2zM60 4.500h2V3h3v1.500h2V18h-7zM61.500 6v10.500h4V6z" fillRule="evenodd" />
        <path d="M77 14h2v3h-2zM80 12h2v5h-2zM83 9.500h2V17h-2zM86 7h2v10h-2zM89 4h2v13h-2z" />
        <path d="M100 7h3l4-4v15l-4-4h-3z" /><path d="M109 7q2 3.500 0 7M111.500 5q3.500 5.500 0 11" fill="none" stroke="#fff" strokeWidth="1.200" />
      </svg>
      <div className="w-[40px] pl-[7px] text-[12px] tracking-[-0.700px] text-white">ESP</div>
      <div className="w-[68px] pt-[2px] text-center text-[12px] leading-[17px] tracking-[-0.600px] whitespace-nowrap text-white">10:17<br />29/08/2018</div>
    </div>
  );
}

export default function App() {
  return (
    <div className="flex h-[776px] w-[1366px] flex-col overflow-hidden bg-white font-['Noto_Sans','Open_Sans',sans-serif]">
      <TabStrip />
      <Toolbar />
      <Page />
      <DownloadBar />
      <Taskbar />
    </div>
  );
}
